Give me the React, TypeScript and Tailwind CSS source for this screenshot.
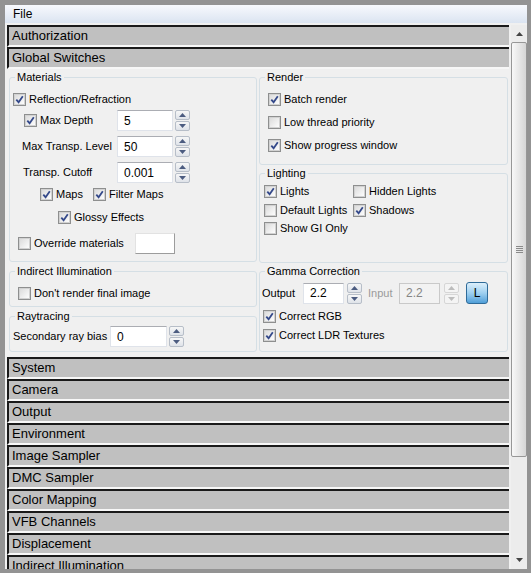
import type { ReactNode } from "react";

const closedRollouts = [
    "System",
    "Camera",
    "Output",
    "Environment",
    "Image Sampler",
    "DMC Sampler",
    "Color Mapping",
    "VFB Channels",
    "Displacement",
    "Indirect Illumination",
];

function RolloutHeader({ title }: { title: string }) {
    return (
        <div className="h-[22px] shrink-0 border-t-2 border-b-2 border-l-2 border-t-[#1a1a1a] border-l-[#1a1a1a] border-b-[#f7f7f7] bg-[#c0c0c0] pl-[3px] text-[13px] leading-[18px]">
            {title}
        </div>
    );
}

function CheckBox({ checked }: { checked?: boolean }) {
    return (
        <span className="flex h-[13px] w-[13px] shrink-0 items-center justify-center border border-[#8e8f8f] bg-white">
            <span className="flex h-[11px] w-[11px] items-center justify-center border border-[#d2d2d2] bg-linear-to-br from-[#dcdcdc] to-[#fdfdfd]">
                {checked && (
                    <svg width="9" height="9" viewBox="0 0 9 9">
                        <path
                            d="M1.3 4.6 L3.6 7.2 L7.8 1.3"
                            fill="none"
                            stroke="#34498a"
                            strokeWidth="1.8"
                        />
                    </svg>
                )}
            </span>
        </span>
    );
}

function Check({ label, checked }: { label: string; checked?: boolean }) {
    return (
        <div className="flex h-[16px] items-center">
            <CheckBox checked={checked} />
            <span className="ml-[3px] whitespace-nowrap">{label}</span>
        </div>
    );
}

function Arrow({ up, color }: { up?: boolean; color: string }) {
    return (
        <svg width="7" height="4" viewBox="0 0 7 4">
            <path d={up ? "M0 4 L3.5 0 L7 4 Z" : "M0 0 L3.5 4 L7 0 Z"} fill={color} />
        </svg>
    );
}

function Spinner({ disabled, className }: { disabled?: boolean; className?: string }) {
    const color = disabled ? "#bcbcbc" : "#4c5c80";
    const half = disabled
        ? "flex h-[10px] items-center justify-center rounded-[2px] border border-[#d6d6d6] bg-[#f4f4f4]"
        : "flex h-[10px] items-center justify-center rounded-[2px] border border-[#b7bec8] bg-linear-to-b from-[#f7f7f7] to-[#dfe3e9]";
    return (
        <div className={"flex h-[21px] w-[15px] shrink-0 flex-col justify-between " + (className ?? "")}>
            <span className={half}>
                <Arrow up color={color} />
            </span>
            <span className={half}>
                <Arrow color={color} />
            </span>
        </div>
    );
}

function NumField({
    value,
    className,
    disabled,
}: {
    value: string;
    className: string;
    disabled?: boolean;
}) {
    const look = disabled
        ? "border-[#c9c9c9] bg-[#f2f2f2] text-[#858585]"
        : "border-[#dfe3ea] border-t-[#abadb3] bg-white";
    return (
        <div className={"flex h-[21px] shrink-0 items-center border pl-[6px] text-[12px] " + look + " " + className}>
            {value}
        </div>
    );
}

function Group({
    title,
    className,
    children,
}: {
    title: string;
    className: string;
    children: ReactNode;
}) {
    return (
        <fieldset className={"min-w-0 rounded-[3px] border border-[#d5dfe5] " + className}>
            <legend className="ml-[5px] px-[2px] leading-[13px]">{title}</legend>
            {children}
        </fieldset>
    );
}

function GlobalSwitches() {
    return (
        <div className="flex h-[288px] shrink-0 gap-[2px] pt-[2px] pl-[2px]">
            <div className="flex w-[248px] flex-col">
                <Group title="Materials" className="h-[191px]">
                    <div className="mt-[6px] flex h-[18px] items-center pl-[3px]">
                        <Check label="Reflection/Refraction" checked />
                    </div>
                    <div className="mt-[2px] flex h-[21px] items-center pl-[14px]">
                        <div className="w-[93px]">
                            <Check label="Max Depth" checked />
                        </div>
                        <NumField value="5" className="w-[56px]" />
                        <Spinner className="ml-[2px]" />
                    </div>
                    <div className="mt-[5px] flex h-[21px] items-center pl-[12px]">
                        <span className="w-[95px] whitespace-nowrap">Max Transp. Level</span>
                        <NumField value="50" className="w-[56px]" />
                        <Spinner className="ml-[2px]" />
                    </div>
                    <div className="mt-[5px] flex h-[21px] items-center pl-[13px]">
                        <span className="w-[94px] whitespace-nowrap">Transp. Cutoff</span>
                        <NumField value="0.001" className="w-[56px]" />
                        <Spinner className="ml-[2px]" />
                    </div>
                    <div className="mt-[3px] flex h-[16px] items-center pl-[30px]">
                        <div className="w-[53px]">
                            <Check label="Maps" checked />
                        </div>
                        <Check label="Filter Maps" checked />
                    </div>
                    <div className="mt-[7px] flex h-[16px] items-center pl-[48px]">
                        <Check label="Glossy Effects" checked />
                    </div>
                    <div className="mt-[8px] flex h-[21px] items-center pl-[8px]">
                        <div className="w-[117px]">
                            <Check label="Override materials" />
                        </div>
                        <div className="h-[21px] w-[40px] border border-[#e2e2e2] border-r-[#9c9c9c] border-b-[#9c9c9c] bg-white" />
                    </div>
                </Group>
                <Group title="Indirect Illumination" className="mt-[3px] h-[42px]">
                    <div className="mt-[7px] pl-[8px]">
                        <Check label="Don't render final image" />
                    </div>
                </Group>
                <Group title="Raytracing" className="mt-[3px] h-[42px]">
                    <div className="mt-[3px] flex h-[21px] items-center pl-[3px]">
                        <span className="w-[97px] whitespace-nowrap">Secondary ray bias</span>
                        <NumField value="0" className="w-[57px]" />
                        <Spinner className="ml-[2px]" />
                    </div>
                </Group>
            </div>

            <div className="flex w-[249px] flex-col">
                <Group title="Render" className="h-[94px]">
                    <div className="flex flex-col gap-[7px] pt-[7px] pl-[8px]">
                        <Check label="Batch render" checked />
                        <Check label="Low thread priority" />
                        <Check label="Show progress window" checked />
                    </div>
                </Group>
                <Group title="Lighting" className="mt-[2px] h-[96px]">
                    <div className="grid grid-cols-[89px_1fr] gap-y-[3px] pt-[3px] pl-[4px]">
                        <Check label="Lights" checked />
                        <Check label="Hidden Lights" />
                        <Check label="Default Lights" />
                        <Check label="Shadows" checked />
                    </div>
                    <div className="mt-[2px] pl-[4px]">
                        <Check label="Show GI Only" />
                    </div>
                </Group>
                <Group title="Gamma Correction" className="mt-[2px] h-[87px]">
                    <div className="mt-[4px] flex h-[22px] items-center pl-[2px]">
                        <span className="w-[41px]">Output</span>
                        <NumField value="2.2" className="w-[41px]" />
                        <Spinner className="ml-[3px]" />
                        <span className="ml-[6px] w-[31px] text-[#9a9a9a]">Input</span>
                        <NumField value="2.2" className="w-[41px]" disabled />
                        <Spinner className="ml-[4px]" disabled />
                        <div className="ml-[7px] flex h-[22px] w-[22px] items-center justify-center rounded-[3px] border border-[#2f6b99] bg-linear-to-b from-[#dceffb] via-[#9fd0f0] to-[#4f9fd8] text-[12px]">
                            L
                        </div>
                    </div>
                    <div className="mt-[4px] flex flex-col gap-[3px] pl-[3px]">
                        <Check label="Correct RGB" checked />
                        <Check label="Correct LDR Textures" checked />
                    </div>
                </Group>
            </div>
        </div>
    );
}

function ScrollBar() {
    return (
        <div className="ml-[2px] flex w-[16px] flex-col bg-[#ececec] pb-[1px]">
            <div className="flex h-[17px] shrink-0 items-center justify-center">
                <Arrow up color="#444" />
            </div>
            <div className="flex h-[415px] shrink-0 items-center justify-center rounded-[2px] border border-[#979797] bg-linear-to-r from-[#f8f8f8] to-[#d6d6d6]">
                <div className="flex flex-col gap-[1px]">
                    <span className="h-[1px] w-[7px] bg-[#8a8a8a]" />
                    <span className="h-[1px] w-[7px] bg-[#8a8a8a]" />
                    <span className="h-[1px] w-[7px] bg-[#8a8a8a]" />
                    <span className="h-[1px] w-[7px] bg-[#8a8a8a]" />
                </div>
            </div>
            <div className="flex-1" />
            <div className="flex h-[17px] shrink-0 items-center justify-center">
                <Arrow color="#444" />
            </div>
        </div>
    );
}

export default function App() {
    return (
        <div className="flex h-[573px] w-[531px] flex-col overflow-hidden bg-[#939393] pt-[5px] pr-[4px] pb-[4px] pl-[5px] font-['Liberation_Sans',Arial,sans-serif] text-[11px] text-black">
            <div className="flex min-h-0 flex-1 flex-col bg-[#f0f0f0]">
                <div className="h-[18px] shrink-0 bg-linear-to-b from-[#f7f9fd] to-[#dbe4f1] pl-[8px] text-[12px] leading-[18px]">
                    File
                </div>
                <div className="flex min-h-0 flex-1 pt-[2px] pl-[2px]">
                    <div className="flex w-[502px] flex-col overflow-hidden">
                        <RolloutHeader title="Authorization" />
                        <RolloutHeader title="Global Switches" />
                        <GlobalSwitches />
                        {closedRollouts.map((t) => (
                            <RolloutHeader key={t} title={t} />
                        ))}
                    </div>
                    <ScrollBar />
                </div>
            </div>
        </div>
    );
}
